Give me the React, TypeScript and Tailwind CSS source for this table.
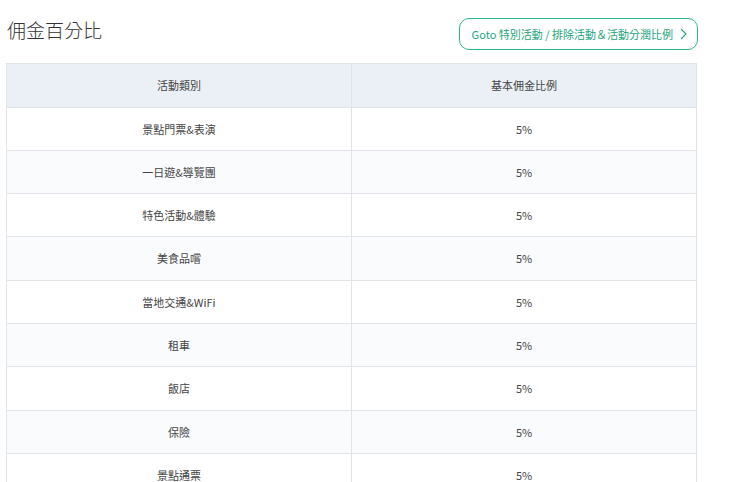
const rows = [
  "景點門票&表演",
  "一日遊&導覽團",
  "特色活動&體驗",
  "美食品嚐",
  "當地交通&WiFi",
  "租車",
  "飯店",
  "保險",
  "景點通票",
];

export default function App() {
  return (
    <div className="h-[482px] w-[731px] overflow-hidden bg-white pl-[6px] pr-[34px] text-[#333] [font-family:'Noto_Sans_CJK_TC','Noto_Sans',sans-serif]">
      <div className="flex h-[63px] items-start justify-between">
        <h1 className="mt-[17px] pl-[1px] text-[19px] font-light leading-[26px] text-[#333]">佣金百分比</h1>
        <button
          type="button"
          className="mt-[18px] mr-[-1px] flex h-[32px] items-center gap-[7px] rounded-[10px] border border-[#2db88c] pl-[12px] pr-[10px] text-[11px] text-[#22a57c]"
        >
          <span>Goto 特別活動 / 排除活動＆活動分潤比例</span>
          <svg width="7" height="12" viewBox="0 0 7 12" fill="none" stroke="currentColor" strokeWidth="1.1">
            <path d="M1 1l5 5-5 5" />
          </svg>
        </button>
      </div>

      <table className="w-[691px] table-fixed border-collapse text-center text-[11px] text-[#444]">
        <thead>
          <tr className="h-[44px] bg-[#ebf0f7]">
            <th className="border border-[#dfe3ea] font-normal">活動類別</th>
            <th className="border border-[#dfe3ea] font-normal">基本佣金比例</th>
          </tr>
        </thead>
        <tbody>
          {rows.map((name, index) => {
            const tall = index > 0 && index % 3 === 0;
            const bg = index % 2 === 0 ? "bg-white" : "bg-[#f9fbfd]";
            return (
              <tr key={name} className={`${tall ? "h-[44px]" : "h-[43px]"} ${bg}`}>
                <td className="border border-[#e1e4ea]">{name}</td>
                <td className="border border-[#e1e4ea]">5%</td>
              </tr>
            );
          })}
        </tbody>
      </table>
    </div>
  );
}
